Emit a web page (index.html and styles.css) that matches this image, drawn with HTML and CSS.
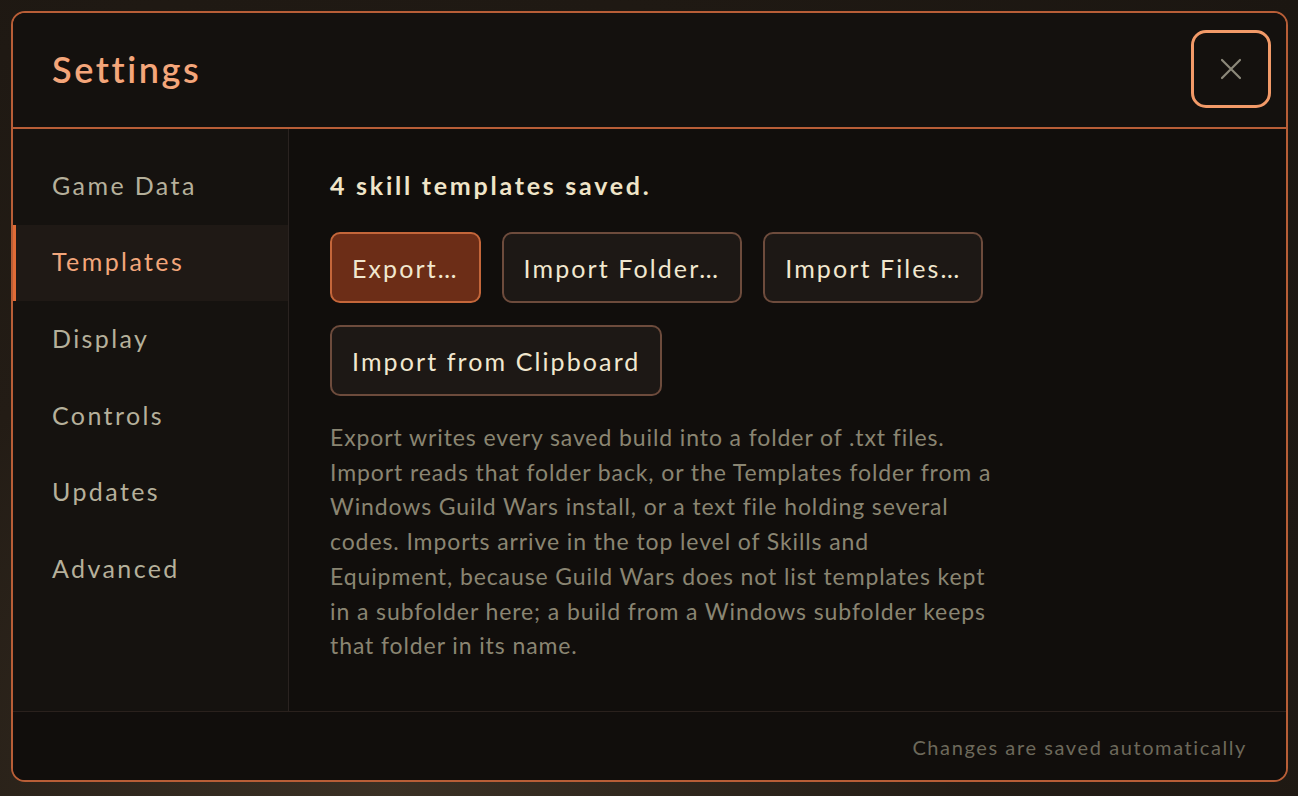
FILE: index.html
```html
<!DOCTYPE html>
<html lang="en">
<head>
<meta charset="utf-8">
<title>Settings</title>
<link rel="stylesheet" href="styles.css">
</head>
<body>
<div class="dialog">
  <header class="header">
    <h1 class="title">Settings</h1>
    <button class="close" aria-label="Close">
      <svg width="22" height="22" viewBox="0 0 22 22"><path d="M2 2L20 20M20 2L2 20" stroke="#8c897a" stroke-width="2.2" stroke-linecap="round" fill="none"/></svg>
    </button>
  </header>
  <div class="main">
    <nav class="sidebar">
      <div class="nav-item">Game Data</div>
      <div class="nav-item active">Templates</div>
      <div class="nav-item">Display</div>
      <div class="nav-item">Controls</div>
      <div class="nav-item">Updates</div>
      <div class="nav-item">Advanced</div>
    </nav>
    <section class="content">
      <div class="status">4 skill templates saved.</div>
      <div class="buttons">
        <button class="btn primary">Export…</button>
        <button class="btn">Import Folder…</button>
        <button class="btn">Import Files…</button>
        <button class="btn">Import from Clipboard</button>
      </div>
      <p class="help">Export writes every saved build into a folder of .txt files. Import reads that folder back, or the Templates folder from a Windows Guild Wars install, or a text file holding several codes. Imports arrive in the top level of Skills and Equipment, because Guild Wars does not list templates kept in a subfolder here; a build from a Windows subfolder keeps that folder in its name.</p>
    </section>
  </div>
  <footer class="footer">Changes are saved automatically</footer>
</div>
</body>
</html>
```
FILE: styles.css
```css
* { box-sizing: border-box; }
html, body { height: 100%; }
body {
  margin: 0;
  padding: 11px 10px 14px 11px;
  background: radial-gradient(ellipse at 30% 100%, #3a3024 0%, #231c15 45%, #1b1611 100%);
  font-family: Lato, "Open Sans", sans-serif;
}
.dialog {
  width: 1277px;
  height: 771px;
  border: 2px solid #b85e37;
  border-radius: 14px;
  background: #110e0c;
  display: flex;
  flex-direction: column;
  overflow: hidden;
}
.header {
  height: 116px;
  flex: none;
  border-bottom: 2px solid #b85e37;
  background: #14110e;
  display: flex;
  align-items: center;
  justify-content: space-between;
  padding: 0 15px 3px 39px;
}
.title {
  margin: 0;
  font-size: 36px;
  font-weight: 600;
  letter-spacing: 2.6px;
  color: #f4a67a;
}
.close {
  width: 80px;
  height: 78px;
  border: 3px solid #f29a68;
  border-radius: 15px;
  background: #14110e;
  display: flex;
  align-items: center;
  justify-content: center;
  padding: 0;
}
.main {
  flex: 1;
  display: flex;
  min-height: 0;
}
.sidebar {
  width: 276px;
  flex: none;
  background: #15120f;
  border-right: 1px solid #2a2320;
  padding-top: 19px;
}
.nav-item {
  height: 76.6px;
  display: flex;
  align-items: center;
  padding: 0 0 3px 39px;
  font-size: 25px;
  letter-spacing: 2.4px;
  color: #b5b09b;
}
.nav-item.active {
  background: #1f1915;
  color: #f2a67b;
  box-shadow: inset 3px 0 0 #e06b36;
}
.content {
  flex: 1;
  padding: 41px 40px 0 41px;
}
.status {
  font-size: 25px;
  font-weight: 700;
  letter-spacing: 2.75px;
  color: #efe4c8;
  line-height: 30px;
}
.buttons {
  margin-top: 32px;
  display: flex;
  flex-wrap: wrap;
  gap: 22px 21px;
  width: 680px;
}
.btn {
  height: 71px;
  padding: 0 20px;
  border: 2px solid #6d4b3c;
  border-radius: 10px;
  background: #1d1815;
  color: #f1e7cf;
  font-family: inherit;
  font-size: 25px;
  letter-spacing: 2.1px;
}
.btn.primary {
  background: #6c2d17;
  border-color: #c4663a;
}
.help {
  margin: 24px 0 0;
  width: 666px;
  font-size: 23px;
  line-height: 34.7px;
  letter-spacing: 0.9px;
  color: #8a8572;
}
.footer {
  height: 69px;
  flex: none;
  border-top: 1px solid #2a211d;
  background: #110e0c;
  display: flex;
  align-items: center;
  justify-content: flex-end;
  padding: 2px 39px 0 0;
  font-size: 20px;
  letter-spacing: 1.6px;
  color: #6d695b;
}
```
